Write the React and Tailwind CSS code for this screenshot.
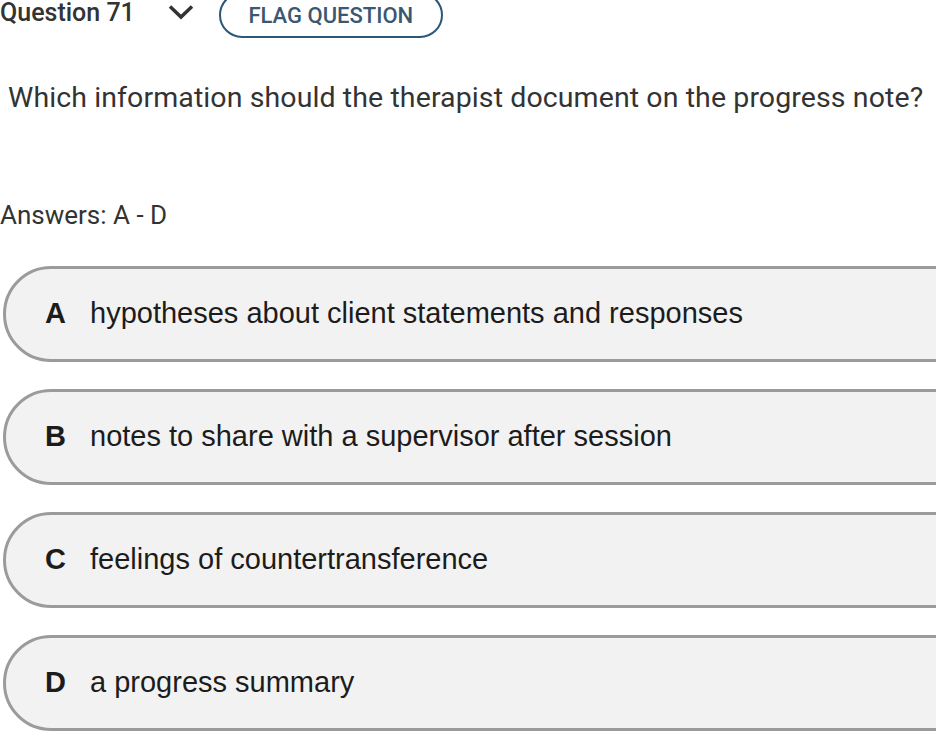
const answers = [
  { letter: "A", text: "hypotheses about client statements and responses" },
  { letter: "B", text: "notes to share with a supervisor after session" },
  { letter: "C", text: "feelings of countertransference" },
  { letter: "D", text: "a progress summary" },
];

export default function App() {
  return (
    <div className="w-[936px] h-[750px] overflow-hidden bg-white font-['Roboto',sans-serif]">
      {/* header */}
      <div className="flex items-start h-[38px]">
        <span className="text-[25px] font-medium text-[#333] leading-none">Question 71</span>
        <svg className="ml-[33px] mt-[4px]" width="26" height="16" viewBox="0 0 26 16" fill="none">
          <path d="M2 2.5l11 10.5L24 2.5" stroke="#333" strokeWidth="3.5" />
        </svg>
        <button className="ml-[25px] -mt-[8px] h-[46px] w-[224px] rounded-full border-2 border-[#2c5878] text-[22px] font-medium text-[#3b5872] pt-[2px] leading-none">
          FLAG QUESTION
        </button>
      </div>

      <p className="mt-[46px] ml-[8px] whitespace-nowrap text-[28.5px] text-[#333] leading-none tracking-[0.1px]">
        Which information should the therapist document on the progress note?
      </p>

      <p className="mt-[89px] text-[26px] text-[#333] leading-none">Answers: A - D</p>

      <div className="mt-[38px] flex flex-col gap-[27px] pl-[3px]">
        {answers.map((a) => (
          <div
            key={a.letter}
            className="h-[96px] -mr-[60px] flex items-center rounded-l-[48px] rounded-r-[48px] border-[3px] border-[#9b9b9b] bg-[#f2f2f2] font-['Liberation_Sans',Arial,sans-serif] text-[#1c1c1c]"
          >
            <span className="ml-[39px] w-[45px] text-[29px] font-bold">{a.letter}</span>
            <span className="text-[29px]">{a.text}</span>
          </div>
        ))}
      </div>
    </div>
  );
}
